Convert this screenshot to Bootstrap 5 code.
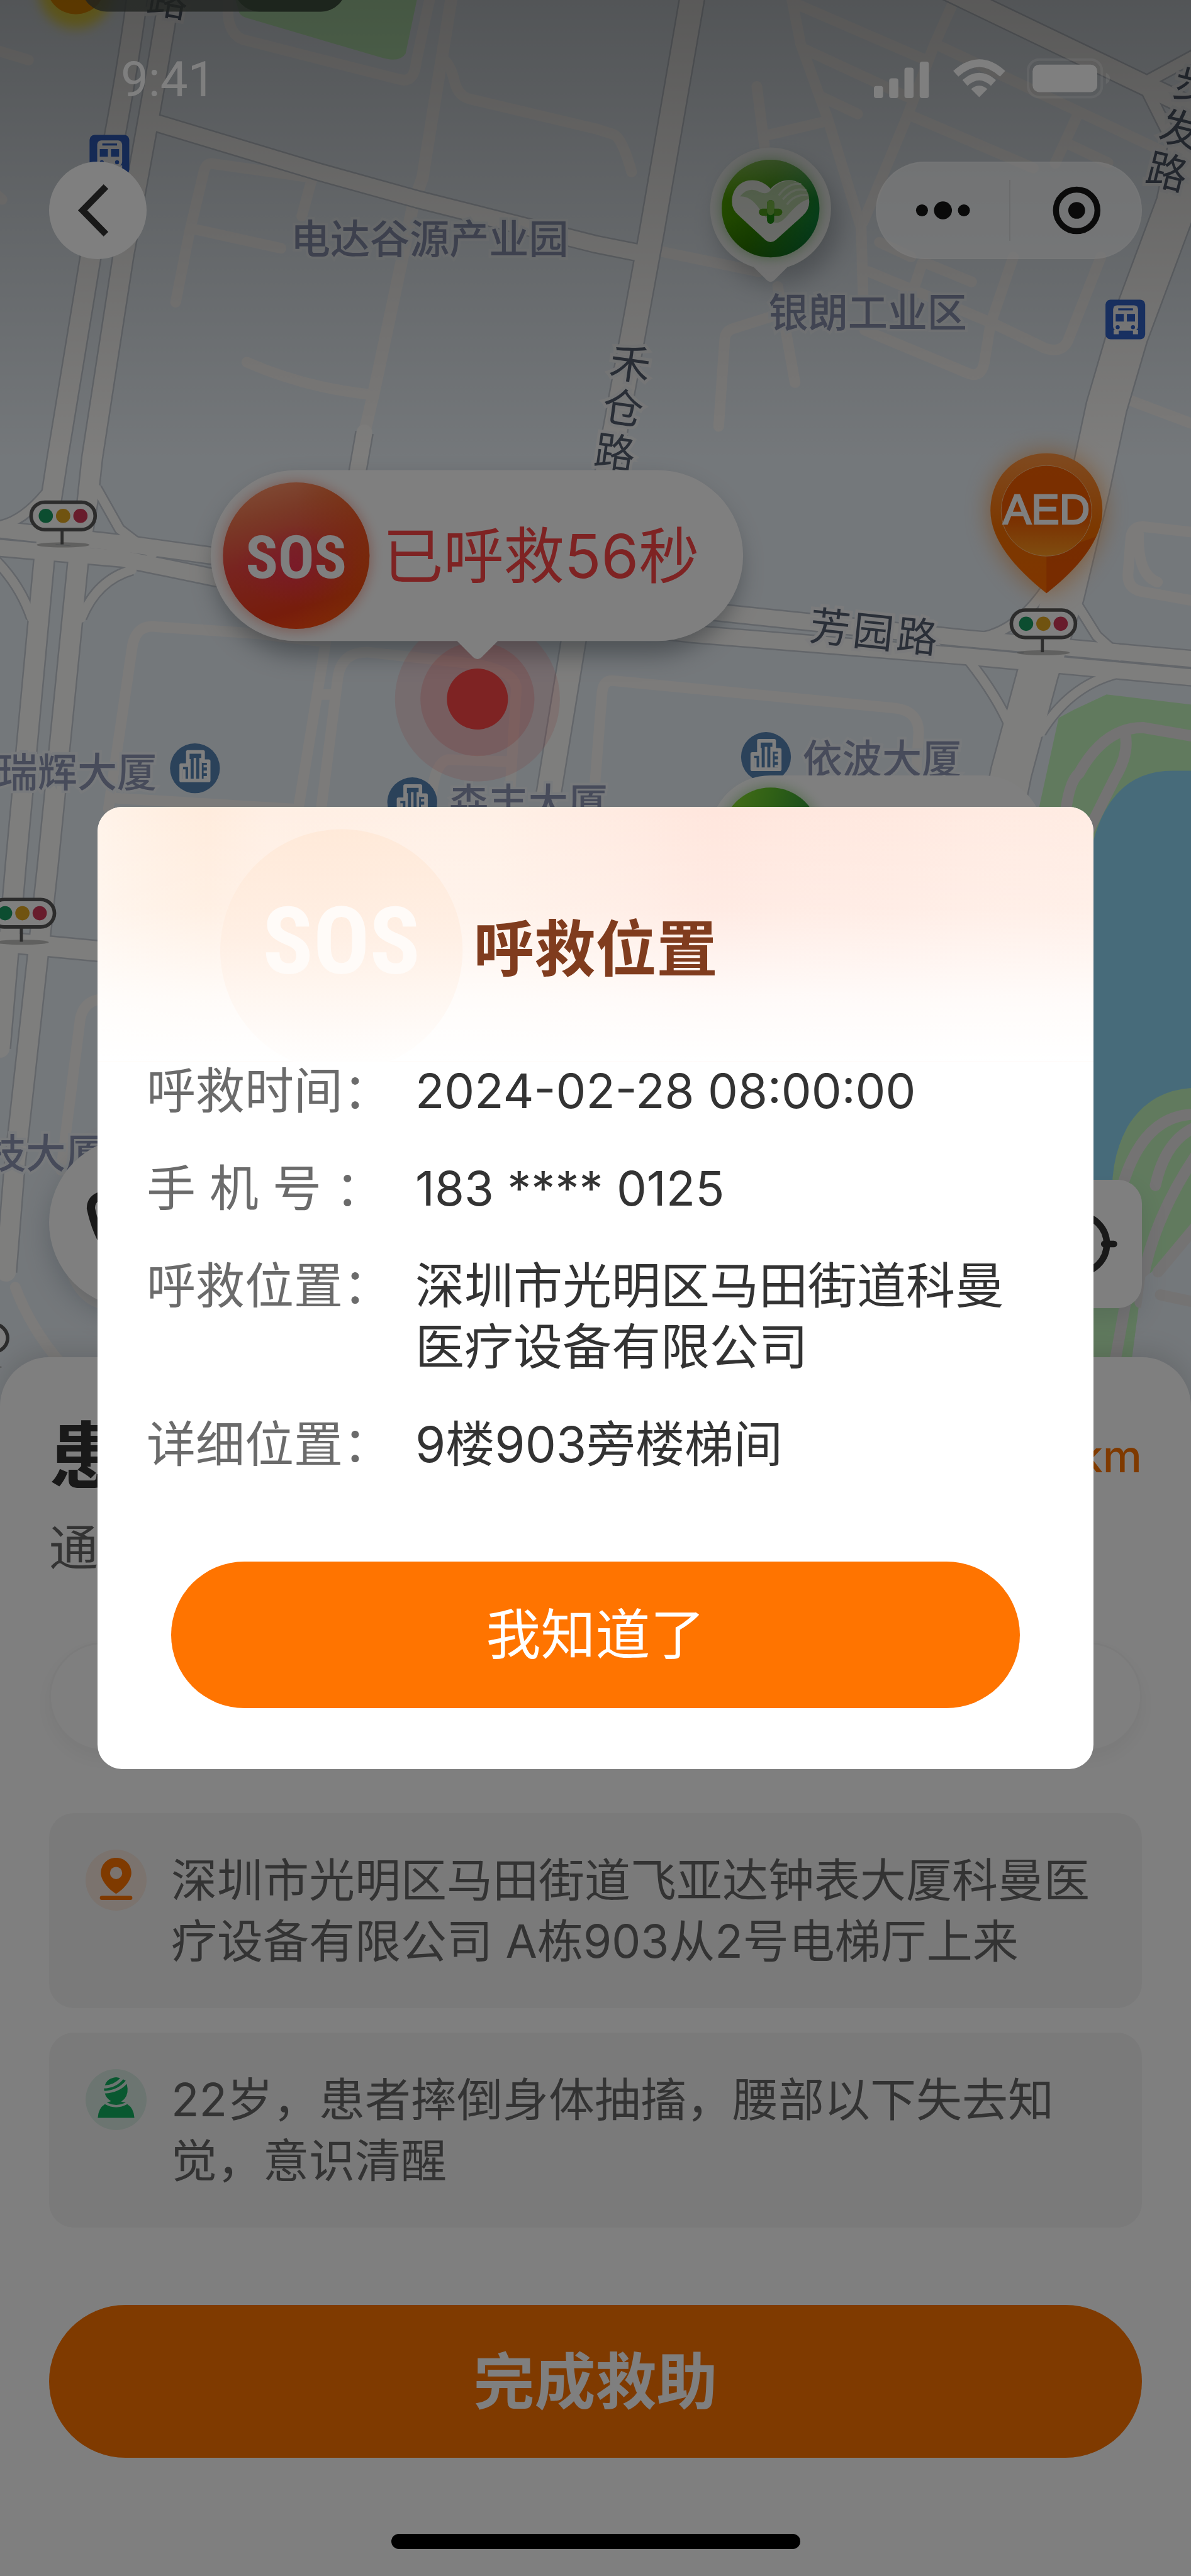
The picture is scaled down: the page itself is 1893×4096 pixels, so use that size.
<!DOCTYPE html>
<html lang="zh-CN">
<head>
<meta charset="utf-8">
<meta name="viewport" content="width=device-width, initial-scale=1">
<title>呼救位置</title>
<link href="https://cdn.jsdelivr.net/npm/bootstrap@5.3.0/dist/css/bootstrap.min.css" rel="stylesheet">
<style>
:root { --brand: #ff7400; --side: 78px; }
body { font-family: Inter, "Noto Sans CJK SC", sans-serif; background: #fff; color: #333; }
.screen { min-height: 100vh; overflow: hidden; }
.map-art { display: block; width: 100%; height: auto; }
.map-art text { font-family: "Noto Sans CJK SC", sans-serif; }

/* status bar and navigation, over the map */
.top-layer { padding: 88px var(--side) 0; }
.status-row { height: 78px; padding: 0 50px 0 114px; }
.clock { font-family: Roboto, sans-serif; font-size: 78px; line-height: 78px; color: #fff; }
.status-icons { width: 376px; height: 78px; }
.nav-row { margin-top: 91px; }
.round-btn { width: 155px; height: 155px; background: #fff; border: 0; }
.capsule { width: 423px; height: 155px; background: rgba(255,255,255,.6); border: 2px solid rgba(255,255,255,.15); }
.capsule button { border: 0; background: none; height: 97px; }
.capsule button + button { border-left: 2px solid rgba(0,0,0,.08); }

/* floating map buttons */
.float-row { top: 1808px; padding: 0 var(--side); }
.call-btn { width: 272px; height: 272px; background: #fff; border: 0; box-shadow: 0 16px 40px rgba(60,80,100,.25); }
.locate-btn { width: 204px; height: 204px; background: #fff; border: 0; border-radius: 38px; box-shadow: 0 16px 40px rgba(60,80,100,.15); }

/* bottom sheet */
.sheet { margin-top: -107px; background: #fff; border-radius: 78px 78px 0 0; padding: 87px var(--side) 43px; box-shadow: 0 -8px 40px rgba(90,90,90,.2); }
.sheet-title { font-size: 116px; line-height: 140px; font-weight: 700; color: #333; }
.sheet-km { font-size: 70px; line-height: 97px; font-weight: 500; color: var(--brand); }
.sheet-note { font-size: 78px; line-height: 97px; color: #666; margin: 28px 0 101px; }
.sheet-input { height: 173px; border: 3px solid #f7f7f7; box-shadow: 0 12px 32px rgba(0,0,0,.05); }
.info-list { margin-top: 99px; gap: 39px; }
.info-item { background: #f5f5f5; border-radius: 39px; padding: 58px 75px 58px 58px; gap: 39px; font-size: 73px; line-height: 97px; color: #666; }
.info-icon { width: 97px; height: 97px; }
.big-btn { background: var(--brand); color: #fff; border: 0; font-size: 97px; line-height: 145px; font-weight: 700; padding: 49px 0; margin: 123px 0 121px; }
.home-bar { width: 650px; height: 24px; background: #000; }

/* dialog */
.dim { background: rgba(0,0,0,.5); }
.dialog-wrap { padding: 0 155px; }
.sos-dialog { border: 0; border-radius: 39px; padding: 168px var(--side) 97px; background: #fff; overflow: hidden; }
.dialog-art { width: 100%; height: auto; }
.dialog-title { font-size: 97px; line-height: 116px; font-weight: 700; color: #803c1e; margin-bottom: 119px; }
.fact-list { gap: 58px; font-size: 78px; line-height: 97px; }
.fact-key { width: 427px; color: #6b6b6b; }
.fact-val { color: #333; }
.fact-num { font-size: 76px; }
.ok-btn { background: var(--brand); color: #fff; border: 0; font-size: 87px; line-height: 129px; padding: 52px 0; margin: 138px 39px 0; }

/* map drawing: each main road is drawn twice, the wider copy shows as its edge */
.base { fill: #e9f0f6; }
.case { --edge: 6px; fill: none; stroke: #c6ccd4; stroke-linejoin: round; }
.road { --edge: 0px; fill: none; stroke: #fdfcfa; stroke-linejoin: round; stroke-linecap: round; }
.w17 { stroke-width: calc(17px + var(--edge)); }
.w22 { stroke-width: calc(22px + var(--edge)); }
.w31 { stroke-width: calc(31px + var(--edge)); }
.w38 { stroke-width: calc(38px + var(--edge)); }
.w46 { stroke-width: calc(46px + var(--edge)); }
.w78 { stroke-width: calc(78px + var(--edge)); }
.lane { fill: none; stroke: #f8f6f4; stroke-linejoin: round; stroke-linecap: round; stroke-width: 21; }
.trail { fill: none; stroke: #e8e6e6; stroke-width: 22; stroke-linecap: round; stroke-linejoin: round; }
.poi { fill: #8e96b4; stroke: #f1f5f8; stroke-width: 10; paint-order: stroke; font-weight: 500; }
.way { fill: #555f70; stroke: #f6f7f8; stroke-width: 12; paint-order: stroke; font-size: 80px; }
</style>
</head>
<body>
<div class="screen position-relative d-flex flex-column">

  <svg class="map-art" viewBox="0 0 2340 2800" role="img" aria-label="地图">
    <defs>
      <linearGradient id="shade" x1="0" y1="0" x2="0" y2="1"><stop offset="0" stop-color="#000" stop-opacity=".29"/><stop offset="1" stop-color="#000" stop-opacity="0"/></linearGradient>
      <linearGradient id="green" x1="0" y1="0" x2="1" y2=".3"><stop offset="0" stop-color="#8fe030"/><stop offset=".5" stop-color="#5fc02c"/><stop offset="1" stop-color="#2c9040"/></linearGradient>
      <linearGradient id="greenTone" x1="0" y1=".2" x2="1" y2=".6"><stop offset="0" stop-color="#5cb400"/><stop offset=".45" stop-color="#3b9a00"/><stop offset="1" stop-color="#109040"/></linearGradient>
      <linearGradient id="greenLight" x1="0" y1="0" x2="0" y2="1"><stop offset="0" stop-color="#fff" stop-opacity=".35"/><stop offset=".4" stop-color="#fff" stop-opacity="0"/><stop offset=".6" stop-color="#003000" stop-opacity="0"/><stop offset="1" stop-color="#003000" stop-opacity=".3"/></linearGradient>
      <linearGradient id="sosRed" x1=".3" y1="0" x2=".6" y2="1"><stop offset="0" stop-color="#ff9468"/><stop offset=".2" stop-color="#f4744e"/><stop offset=".48" stop-color="#f04840"/><stop offset=".85" stop-color="#ee3a18"/><stop offset="1" stop-color="#ff4c12"/></linearGradient>
      <radialGradient id="sosPink"><stop offset="0" stop-color="#f8286c" stop-opacity=".5"/><stop offset="1" stop-color="#f8286c" stop-opacity="0"/></radialGradient>
      <linearGradient id="sosSide" x1="0" y1="0" x2="1" y2="0"><stop offset=".5" stop-color="#f06000" stop-opacity="0"/><stop offset="1" stop-color="#f06000" stop-opacity=".5"/></linearGradient>
      <linearGradient id="pin" x1="0" y1="0" x2="0" y2="1"><stop offset="0" stop-color="#ff9440"/><stop offset=".55" stop-color="#f87000"/><stop offset="1" stop-color="#ff6c00"/></linearGradient>
      <linearGradient id="pinIn" x1="0" y1="0" x2="0" y2="1"><stop offset="0" stop-color="#f46000"/><stop offset=".55" stop-color="#f45c00"/><stop offset="1" stop-color="#ff9a20"/></linearGradient>
      <filter id="blur12" x="-30%" y="-30%" width="160%" height="160%"><feGaussianBlur stdDeviation="12"/></filter>
      <filter id="blur24" x="-30%" y="-30%" width="160%" height="160%"><feGaussianBlur stdDeviation="24"/></filter>
      <g id="signalLight">
        <ellipse cx="66" cy="87" rx="52" ry="5" fill="#9a9a98" opacity=".6"/>
        <path d="M64 58V86" stroke="#5a5a5a" stroke-width="6"/>
        <rect x="3" y="3" width="126" height="54" rx="27" fill="#fff" stroke="#585858" stroke-width="7"/>
        <circle cx="32" cy="30" r="14" fill="#189a60"/><circle cx="66" cy="30" r="14" fill="#e0a620"/><circle cx="100" cy="30" r="14" fill="#d03858"/>
      </g>
      <g id="tower">
        <circle r="49" fill="#5784b4"/>
        <path d="M-27 24V-6H-14V-32H16V-14H27V24Z" fill="none" stroke="#fff" stroke-width="7" stroke-linejoin="round"/>
        <path d="M-21 22V2M-11 22V-18M0 22V-20M11 22V-20M17 -4H25M17 7H25M17 18H25" stroke="#fff" stroke-width="5"/>
      </g>
      <g id="busStop">
        <rect width="78" height="78" rx="10" fill="#3568d2"/>
        <rect x="15" y="11" width="49" height="50" rx="8" fill="#fff"/><path d="M16 60h10v8H16zM54 60h10v8H54z" fill="#fff"/>
        <path d="M25 19H54" stroke="#3568d2" stroke-width="4"/><rect x="20" y="28" width="16" height="15" fill="#3568d2"/><rect x="42" y="28" width="16" height="15" fill="#3568d2"/><circle cx="24" cy="54" r="4" fill="#3568d2"/><circle cx="54" cy="54" r="4" fill="#3568d2"/>
      </g>
      <g id="mainRoads">
        <path class="w38" d="M270 -10C250 150 215 330 178 505L113 900L100 985L87 1098L31 1700L0 2060"/>
        <path class="w38" d="M333 -10C300 200 270 350 242 505L181 900L172 985L154 1098L94 1700L28 2300L12 2500"/>
        <path class="w31" d="M-10 1040L240 1068L414 1092L1431 1206L1898 1255L2350 1296"/>
        <path class="w31" d="M-10 1076L240 1098L425 1136L1357 1246L1898 1290L2350 1332"/>
        <path class="w38" d="M-10 1850L200 1870"/>
        <path class="w31" d="M295 238L627 338L821 392L1170 480L1270 500"/>
        <path class="w46" d="M1361 -10L1280 459L1241 672L1180 1000L1127 1259L1078 1560"/>
        <path class="w31" d="M716 850L702 930L690 1000"/>
        <path class="w38" d="M1860 -20L2245 165L2350 215"/>
        <path class="w22" d="M2245 165L2350 108M2250 170L2310 290"/>
        <path class="w78" d="M2345 240L2312 400L2215 660L2174 800L2140 960L2090 1170L2040 1320L1987 1517L1950 1700"/>
        <path class="w17" d="M90 970Q40 1030 -10 1035M190 960L235 1040L300 1090M-10 1100Q40 1150 62 1215M160 1215Q190 1140 260 1120M2060 1150Q2000 1240 1930 1252M2105 1170L2155 1250L2200 1290M1905 1300Q1960 1370 1985 1430M2045 1440Q2100 1350 2190 1325"/>
      </g>
    </defs>
    <rect class="base" width="2340" height="2800"/>
    <path d="M463 0L470 25Q474 32 484 35L745 112Q785 125 797 105L819 0Z" fill="#c4f5bd"/>
    <g class="lane">
      <path d="M888 -10L830 350L812 400L791 505L735 769L716 850" stroke-width="24"/>
      <path d="M846 -10L818 120Q814 165 785 156L478 78Q452 68 448 30V-10"/>
      <path d="M345 594L373 453L400 340Q404 318 420 322L597 347M616 340L593 425M380 450L552 488M485 712Q600 762 724 775"/>
      <path d="M-10 98L56 118M-10 380L4 392M873 118Q886 130 893 160Q900 190 925 195L1170 253L1205 264Q1222 270 1241 338"/>
      <path d="M1554 -10L1573 86L1625 230L1692 448L1696 590M1558 5L1819 118M1577 95L1782 190M1875 0L1834 92L1782 230L1696 436M1849 92L2290 300M1789 227L2030 330M2118 224L2073 321M2095 281L2177 320M1487 170L1502 287M1502 267L1625 238M1618 192L1685 224M1297 494L1491 534"/>
      <path d="M1707 534L1782 565L1954 637L2050 683Q2085 697 2098 670L2163 505M1991 505L1946 637L1934 712Q1928 742 1905 735L1699 649M1819 517L1909 554M1812 517L1796 565M1728 476L1790 505"/>
      <path d="M1412 838L1424 665Q1426 650 1440 646L1516 622M1528 563L1562 752M2215 785L2340 832"/>
      <path d="M2350 1047L2245 1035Q2225 1035 2222 1055L2216 1130Q2216 1155 2240 1162L2350 1182M2237 1050Q2235 1130 2274 1144"/>
      <path d="M213 1590L260 1270Q268 1225 310 1232L500 1245L640 1262L586 1590M631 1590L664 1330Q672 1280 724 1282L933 1305Q1020 1320 1014 1360L1000 1590M625 1365H650M231 1569L575 1590M846 1590Q850 1500 880 1493L1000 1497"/>
      <path d="M1165 1590L1183 1360Q1186 1336 1205 1338L1760 1392Q1805 1398 1805 1440L1798 1550"/>
      <path d="M120 2300L158 2000Q166 1970 192 1965M30 2530Q60 2610 120 2680M130 2450Q140 2540 192 2560"/>
    </g>
    <use href="#mainRoads" class="case"/>
    <use href="#mainRoads" class="road"/>
    <path d="M2080 1411L2110 1395L2174 1365L2350 1386V2500L2245 2510L2220 2700H2060V1700L2030 1640Z" fill="#c2f5bd"/>
    <path class="trail" d="M2090 1640Q2095 1540 2120 1520Q2170 1430 2245 1430L2350 1448M2210 1440Q2220 1480 2190 1530L2130 1650"/>
    <path d="M2140 1690Q2170 1515 2304 1515H2350V2138Q2260 2140 2215 2215Q2185 2270 2185 2340H2130Z" fill="#8fd7f5"/>
    <path class="trail" d="M2200 2350Q2240 2190 2350 2190M2270 2330Q2290 2240 2350 2215M2240 2560Q2250 2420 2350 2270M2190 2680L2215 2540"/>
    <path d="M2350 2430L2250 2510L2225 2700H2350Z" class="base"/>
    <path class="trail" d="M2350 2410L2275 2500M2280 2545L2350 2560"/>

    <g>
      <circle cx="149" cy="-16" r="72" fill="#ffe94a" filter="url(#blur12)"/>
      <circle cx="149" cy="-30" r="58" fill="#ff9d00"/>
      <text class="way" transform="translate(286 22) rotate(10)">路</text>
      <rect x="160" y="-80" width="520" height="103" rx="50" fill="#59625a" opacity=".8"/>
      <rect x="460" y="-80" width="220" height="103" rx="50" fill="#3f5a3d" opacity=".6"/>
    </g>

    <g class="poi" font-size="78">
      <text x="571" y="498">电达谷源产业园</text>
      <text x="1510" y="643">银朗工业区</text>
      <text x="-4" y="1547">瑞辉大厦</text>
      <text x="882" y="1607">森丰大厦</text>
      <text x="1577" y="1521">依波大厦</text>
      <text x="207" y="2296" text-anchor="end">科技大厦</text>
    </g>
    <g class="way" text-anchor="middle">
      <text transform="translate(1234 744) rotate(8)">禾</text>
      <text transform="translate(1220 831) rotate(8)">仓</text>
      <text transform="translate(1204 918) rotate(8)">路</text>
      <text transform="translate(1628 1262) rotate(6)">芳</text>
      <text transform="translate(1713 1271) rotate(6)">园</text>
      <text transform="translate(1799 1280) rotate(6)">路</text>
      <text transform="translate(2340 196) rotate(14)">步</text>
      <text transform="translate(2312 282) rotate(14)">发</text>
      <text transform="translate(2286 366) rotate(14)">路</text>
    </g>
    <use href="#tower" x="383" y="1510"/><use href="#tower" x="810" y="1577"/><use href="#tower" x="1505" y="1488"/>
    <use href="#busStop" x="176" y="265"/><use href="#busStop" x="2172" y="589"/>
    <use href="#signalLight" x="58" y="984"/><use href="#signalLight" x="1984" y="1196"/><use href="#signalLight" x="-22" y="1765"/><use href="#signalLight" x="-114" y="2600"/>

    <!-- first-aider marker -->
    <g>
      <circle cx="1530" cy="440" r="118" fill="#4c525c" opacity=".35" filter="url(#blur24)"/>
      <path d="M1514 290a120 120 0 0 1 33 235L1521 551q-7 6 -14 0L1481 525A120 120 0 0 1 1514 290Z" fill="#fff"/>
      <circle cx="1514" cy="410" r="98" fill="#58b040" opacity=".5" filter="url(#blur12)"/>
      <circle cx="1514" cy="410" r="96" fill="url(#greenTone)"/><circle cx="1514" cy="410" r="96" fill="url(#greenLight)"/>
      <path d="M1514 371C1485 340 1438 354 1438 397Q1438 412 1452 424L1504 472Q1514 480 1524 472L1577 424Q1590 412 1590 397C1590 354 1543 340 1514 371Z" fill="#f4f8f0"/>
      <path d="M1454 386Q1470 366 1492 377Q1506 384 1514 374C1530 356 1548 352 1566 358Q1588 368 1590 391C1556 400 1545 438 1525 438C1496 438 1492 385 1454 386Z" fill="#b4d99c" opacity=".75"/>
      <path d="M1530 384Q1550 358 1574 362M1538 392Q1560 366 1584 374M1546 402Q1562 380 1588 384" fill="none" stroke="#e6f2de" stroke-width="4" opacity=".8"/>
      <path d="M1498 417H1530" stroke="#58b020" stroke-width="14" stroke-linecap="round"/><path d="M1514 400V433" stroke="#209a10" stroke-width="14" stroke-linecap="round"/><path d="M1514 400V416" stroke="#86cc50" stroke-width="14" stroke-linecap="round"/>
    </g>
    <rect width="2340" height="900" fill="url(#shade)"/>

    <!-- AED pin -->
    <g>
      <path d="M2056 891C2120 891 2166 940 2166 1003C2166 1070 2115 1130 2056 1166C1997 1130 1946 1070 1946 1003C1946 940 1992 891 2056 891Z" fill="#ff7800" opacity=".55" filter="url(#blur24)"/>
      <path d="M2056 891C2120 891 2166 940 2166 1003C2166 1060 2120 1115 2056 1166C1992 1115 1946 1060 1946 1003C1946 940 1992 891 2056 891Z" fill="url(#pin)"/>
      <path d="M2056 1090V1166C2100 1132 2135 1095 2153 1055Z" fill="#e64800" opacity=".55"/>
      <circle cx="2056" cy="1004" r="89" fill="url(#pinIn)" stroke="#ffcf9c" stroke-width="1"/>
      <text x="2056" y="1030" text-anchor="middle" font-size="83" fill="#fff" stroke="#fff" stroke-width="3" style="font-family:'Liberation Sans',sans-serif">AED</text>
    </g>

    <!-- caller marker -->
    <g>
      <rect x="424" y="950" width="1026" height="336" rx="168" fill="#48525c" opacity=".5" filter="url(#blur24)"/>
      <circle cx="938" cy="1374" r="162" fill="#fc4646" opacity=".14"/><circle cx="938" cy="1374" r="112" fill="#fc4646" opacity=".2"/><circle cx="938" cy="1374" r="60" fill="#fc4646"/>
      <path d="M582 924H1292a168 168 0 0 1 0 336H978L946 1292q-8 7 -16 0L898 1260H582a168 168 0 0 1 0-336Z" fill="#fff"/>
      <circle cx="582" cy="1094" r="148" fill="#f06a50" opacity=".45" filter="url(#blur12)"/>
      <circle cx="582" cy="1092" r="144" fill="url(#sosRed)"/><circle cx="582" cy="1092" r="144" fill="url(#sosSide)"/>
      <ellipse cx="582" cy="1112" rx="120" ry="80" fill="url(#sosPink)"/>
      <text x="582" y="1136" text-anchor="middle" font-size="118" font-weight="700" fill="#fff" style="font-family:'Liberation Sans Narrow','Roboto Condensed','Liberation Sans',sans-serif">SOS</text>
      <text x="752" y="1136" font-size="119" fill="#fc4646" style="font-family:Inter,'Noto Sans CJK SC',sans-serif">已呼救56秒</text>
    </g>
    <!-- lower marker, mostly behind the dialog -->
    <rect x="1394" y="1524" width="657" height="240" rx="120" fill="#fff"/>
    <circle cx="1514" cy="1646" r="102" fill="#58b040" opacity=".4" filter="url(#blur12)"/>
    <circle cx="1514" cy="1644" r="96" fill="url(#green)"/>
  </svg>

  <header class="top-layer position-absolute top-0 start-0 w-100">
    <div class="status-row d-flex justify-content-between align-items-center">
      <span class="clock">9:41</span>
      <svg class="status-icons" viewBox="0 0 465 96" fill="#fff" aria-hidden="true">
        <rect x="0" y="60" width="18" height="24" rx="5"/><rect x="30" y="45" width="18" height="39" rx="5"/><rect x="60" y="24" width="18" height="60" rx="5"/><rect x="90" y="12" width="18" height="72" rx="5"/>
        <g fill="none" stroke="#fff" stroke-width="15"><path d="M161 36Q207 -6 253 36"/><path d="M179 54Q207 29 235 54"/></g><path d="M191 66Q207 53 223 66L207 82Z"/>
        <rect x="303" y="8" width="145" height="74" rx="22" fill="none" stroke="#fff" stroke-width="5" opacity=".25"/><rect x="312" y="18" width="127" height="54" rx="13"/><path d="M456 34q8 4 8 11t-8 11z" opacity=".3"/>
      </svg>
    </div>
    <div class="nav-row d-flex justify-content-between">
      <button type="button" class="round-btn rounded-circle p-0" aria-label="返回">
        <svg viewBox="0 0 192 192" width="100%" height="100%"><path d="M112 49L66 96L112 143" fill="none" stroke="#333" stroke-width="13"/></svg>
      </button>
      <div class="capsule rounded-pill d-flex align-items-center">
        <button type="button" class="p-0 w-50" aria-label="更多"><svg viewBox="0 0 264 120" width="100%" height="97" fill="#141414"><circle cx="90" cy="60" r="12"/><circle cx="132" cy="60" r="18"/><circle cx="174" cy="60" r="12"/></svg></button>
        <button type="button" class="p-0 w-50" aria-label="关闭"><svg viewBox="0 0 264 120" width="100%" height="97"><circle cx="134" cy="60" r="42" fill="none" stroke="#141414" stroke-width="12"/><circle cx="134" cy="60" r="17" fill="#141414"/></svg></button>
      </div>
    </div>
  </header>

  <div class="float-row position-absolute start-0 w-100 d-flex justify-content-between align-items-end">
    <button type="button" class="call-btn rounded-circle p-0" aria-label="拨打电话">
      <svg viewBox="0 0 336 336" width="100%" height="100%"><path d="M82 140Q82 124 96 117L124 108Q140 104 148 120L162 148Q168 162 156 172L146 180Q160 210 190 226L200 216Q210 208 222 213L250 227Q264 236 260 250L252 276Q244 290 228 288Q110 270 82 140Z" fill="none" stroke="#333" stroke-width="16"/></svg>
    </button>
    <button type="button" class="locate-btn p-0" aria-label="定位">
      <svg viewBox="0 0 252 252" width="100%" height="100%" fill="none" stroke="#333" stroke-width="13" stroke-linecap="round"><circle cx="126" cy="126" r="57"/><path d="M178 126H197M74 126H55M126 74V55M126 178V197"/></svg>
    </button>
  </div>

  <main class="sheet position-relative flex-grow-1 d-flex flex-column">
    <div class="d-flex justify-content-between align-items-center">
      <h1 class="sheet-title m-0">患</h1>
      <span class="sheet-km">km</span>
    </div>
    <p class="sheet-note">通</p>
    <input type="text" class="sheet-input form-control rounded-pill" aria-label="搜索">
    <div class="info-list d-flex flex-column">
      <div class="info-item d-flex align-items-start">
        <svg class="info-icon flex-shrink-0" viewBox="0 0 120 120" aria-hidden="true"><circle cx="60" cy="60" r="60" fill="#f6e6dc"/><path d="M60 16C77 16 90 29 90 46C90 60 76 77 60 87C44 77 30 60 30 46C30 29 43 16 60 16Z" fill="#ff7400"/><circle cx="60" cy="46" r="12" fill="#f6e6dc"/><path d="M32 95H88" stroke="#ff7400" stroke-width="8" stroke-linecap="round"/></svg>
        <span>深圳市光明区马田街道飞亚达钟表大厦科曼医疗设备有限公司 A栋903从2号电梯厅上来</span>
      </div>
      <div class="info-item d-flex align-items-start">
        <svg class="info-icon flex-shrink-0" viewBox="0 0 120 120" aria-hidden="true"><circle cx="60" cy="60" r="60" fill="#d9ebe2"/><g fill="#12b060"><path d="M24 96Q25 77 38 69Q60 81 82 69Q95 77 96 96Z"/><path d="M38 32Q42 18 60 16Q64 16 68 18Q56 31 38 32ZM74 20L79 23Q63 42 37 43L36 38Q60 37 74 20ZM81 29Q86 48 76 59L70 64L79 66Q60 75 42 66L50 63Q40 57 38 48Q66 46 81 29Z"/></g></svg>
        <span>22岁，患者摔倒身体抽搐，腰部以下失去知觉，意识清醒</span>
      </div>
    </div>
    <button type="button" class="big-btn btn rounded-pill w-100">完成救助</button>
    <div class="home-bar rounded-pill mx-auto"></div>
  </main>

  <div class="dim position-absolute top-0 start-0 w-100 h-100 d-flex align-items-center dialog-wrap" role="dialog" aria-modal="true" aria-labelledby="dlgTitle">
    <section class="sos-dialog position-relative w-100">
      <svg class="dialog-art position-absolute top-0 start-0" viewBox="0 0 1956 500" aria-hidden="true">
        <defs>
          <linearGradient id="hBase" x1="0" y1="0" x2="1" y2="0"><stop offset="0" stop-color="#fff3e9"/><stop offset=".11" stop-color="#ffecdd"/><stop offset=".17" stop-color="#ffefe4"/><stop offset=".4" stop-color="#fff0e6"/><stop offset=".62" stop-color="#ffe6dd"/><stop offset="1" stop-color="#ffece3"/></linearGradient>
          <linearGradient id="hFade" x1="0" y1="0" x2="0" y2="1"><stop offset="0" stop-color="#fff" stop-opacity="0"/><stop offset=".4" stop-color="#fff" stop-opacity=".2"/><stop offset=".75" stop-color="#fff" stop-opacity=".8"/><stop offset="1" stop-color="#fff"/></linearGradient>
          <linearGradient id="hDisc" x1="0" y1="0" x2="0" y2="1"><stop offset="0" stop-color="#ffe8d6"/><stop offset=".45" stop-color="#ffeee2"/><stop offset="1" stop-color="#fff"/></linearGradient>
        </defs>
        <rect width="1956" height="500" fill="url(#hBase)"/>
        <rect width="1956" height="500" fill="url(#hFade)"/>
        <circle cx="479" cy="282" r="238" fill="url(#hDisc)" opacity=".8"/>
        <text x="479" y="328" text-anchor="middle" font-size="184" font-weight="700" fill="#fffbf8" style="font-family:'Liberation Sans Narrow','Roboto Condensed','Liberation Sans',sans-serif">SOS</text>
      </svg>
      <div class="position-relative">
        <h2 id="dlgTitle" class="dialog-title text-center mt-0">呼救位置</h2>
        <dl class="fact-list d-flex flex-column m-0">
          <div class="d-flex"><dt class="fact-key fw-normal flex-shrink-0">呼救时间：</dt><dd class="fact-val fact-num m-0">2024-02-28 08:00:00</dd></div>
          <div class="d-flex"><dt class="fact-key fw-normal flex-shrink-0">手 机 号 ：</dt><dd class="fact-val fact-num m-0">183 **** 0125</dd></div>
          <div class="d-flex"><dt class="fact-key fw-normal flex-shrink-0">呼救位置：</dt><dd class="fact-val m-0">深圳市光明区马田街道科曼医疗设备有限公司</dd></div>
          <div class="d-flex"><dt class="fact-key fw-normal flex-shrink-0">详细位置：</dt><dd class="fact-val m-0">9楼903旁楼梯间</dd></div>
        </dl>
        <div class="d-flex"><button type="button" class="ok-btn btn rounded-pill flex-grow-1">我知道了</button></div>
      </div>
    </section>
  </div>
</div>
<script src="https://cdn.jsdelivr.net/npm/bootstrap@5.3.0/dist/js/bootstrap.bundle.min.js"></script>
</body>
</html>
